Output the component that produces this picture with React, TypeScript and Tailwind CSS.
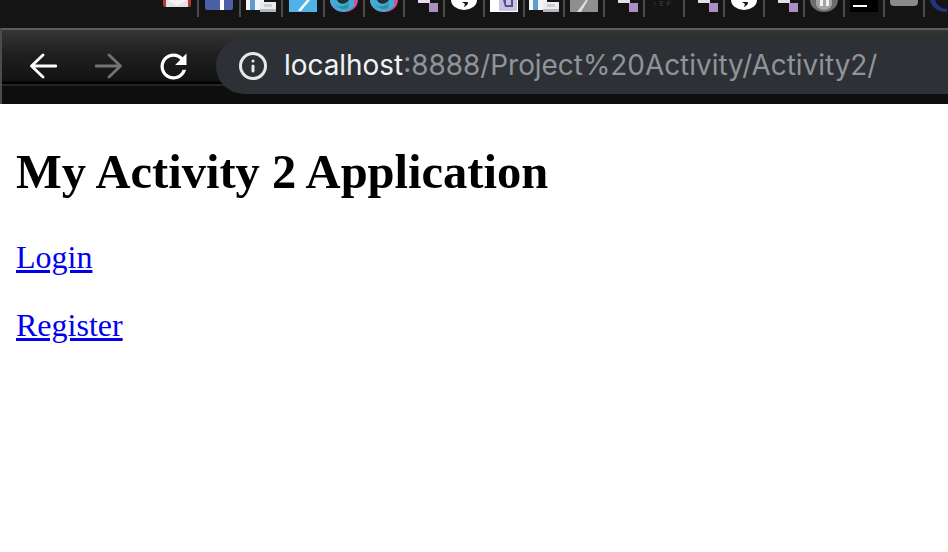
import { Info } from 'lucide-react';

function Gmail() {
  return (
    <svg width="28" height="7" viewBox="0 0 28 7">
      <path d="M0 0h28v5a2 2 0 0 1-2 2H2a2 2 0 0 1-2-2z" fill="#b5392c" />
      <path d="M3 0h22v7H3z" fill="#e4e1df" />
      <path d="M4 0l10 6 10-6z" fill="#f4f2f1" />
    </svg>
  );
}

function Facebook() {
  return (
    <svg width="28" height="10" viewBox="0 0 28 10">
      <path d="M0 0h28v8a2 2 0 0 1-2 2H2a2 2 0 0 1-2-2z" fill="#4a5fa5" />
      <path d="M15 0h4v10h-4z" fill="#ffffff" />
    </svg>
  );
}

function Docs() {
  return (
    <svg width="30" height="12" viewBox="0 0 30 12">
      <path d="M0 0h18v10H0z" fill="#f2f4f6" />
      <path d="M4 0h5v10H4z" fill="#5f9bd1" />
      <path d="M14 2h16v10H14z" fill="#e9ebee" />
      <path d="M14 9h16v3H14z" fill="#b4b7bd" />
      <path d="M18 4h8v3h-8z" fill="#c9ccd0" />
    </svg>
  );
}

function Pencil() {
  return (
    <svg width="28" height="12" viewBox="0 0 28 12">
      <path d="M0 0h28v12H0z" fill="#4fb3e8" />
      <path d="M9 11l2-3 7-8h3l-9 11z" fill="#ffffff" />
    </svg>
  );
}

function Swirl() {
  return (
    <svg width="28" height="12" viewBox="0 0 28 12">
      <path d="M0 0a14 12 0 0 0 28 0z" fill="#d0529b" />
      <path d="M0 0a13 12 0 0 0 24 6V0z" fill="#42abd6" />
      <path d="M7 0c2 5 9 5 12 0z" fill="#1f2f36" />
      <path d="M4 4c5 4 11 3 15-1l-1 5c-4 2-9 1-14-4z" fill="#2c8f94" />
    </svg>
  );
}

function Squares() {
  return (
    <svg width="28" height="12" viewBox="0 0 28 12">
      <path d="M8 0h12v3H8z" fill="#e8dcea" />
      <path d="M19 3h9v9h-9z" fill="#a98fc0" />
    </svg>
  );
}

function Moon() {
  return (
    <svg width="28" height="10" viewBox="0 0 28 10">
      <path d="M1 0a13 10 0 0 0 26 0z" fill="#ffffff" />
      <path d="M12 2h6c0 3-2 4-4 5l1-3z" fill="#141414" />
    </svg>
  );
}

function Tile() {
  return (
    <svg width="28" height="12" viewBox="0 0 28 12">
      <path d="M0 0h28v12H0z" fill="#ffffff" />
      <path d="M9 0h18v11H9z" fill="#c9c3dd" />
      <path d="M13 0l2 7h8V0h-2v5h-5V0z" fill="#5c4a98" />
    </svg>
  );
}

function GrayTile() {
  return (
    <svg width="28" height="12" viewBox="0 0 28 12">
      <path d="M0 0h28v12H0z" fill="#8f8f8f" />
      <path d="M7 12l3-4 6-8h2l-7 12z" fill="#dedede" />
    </svg>
  );
}

function Elf() {
  return (
    <span className="block h-[8px] w-[28px] text-center font-['Liberation_Sans',sans-serif] text-[7px] leading-[8px] tracking-[3px] text-[#4a443d]">
      ‹EF
    </span>
  );
}

function Pause() {
  return (
    <svg width="28" height="12" viewBox="0 0 28 12">
      <path d="M0 0a14 12 0 0 0 28 0z" fill="#6c6c6c" />
      <path d="M6 0h16v4a8 6 0 0 1-16 0z" fill="#a5a5a5" />
      <path d="M10 0h3v6h-3zM16 0h3v6h-3z" fill="#f2f2f2" />
    </svg>
  );
}

function Terminal() {
  return (
    <svg width="28" height="12" viewBox="0 0 28 12">
      <path d="M0 0h28v12H0z" fill="#000000" />
      <path d="M3 5h14v2H3z" fill="#ffffff" />
    </svg>
  );
}

function Cloud() {
  return (
    <svg width="28" height="6" viewBox="0 0 28 6">
      <path d="M0 0h28v2a4 4 0 0 1-4 4H4a4 4 0 0 1-4-4z" fill="#8c8888" />
    </svg>
  );
}

function Ring() {
  return (
    <svg width="28" height="12" viewBox="0 0 28 12">
      <path d="M0 0a16 14 0 0 0 17 12v-3a13 12 0 0 1-12-9z" fill="#27317c" />
    </svg>
  );
}

function BackArrow({ flip = false, color }: { flip?: boolean; color: string }) {
  return (
    <svg width="28" height="26" viewBox="0 0 28 26" className={`${flip ? '-scale-x-100' : ''} ${color} shrink-0`}>
      <path d="M14 2L2.5 13 14 24M3 13h24" fill="none" stroke="currentColor" strokeWidth="2.8" strokeLinecap="round" strokeLinejoin="round" />
    </svg>
  );
}

function Reload() {
  return (
    <svg width="39" height="39" viewBox="0 0 24 24" className="shrink-0 text-white">
      <path
        fill="currentColor"
        d="M17.65 6.35C16.2 4.9 14.21 4 12 4c-4.42 0-7.99 3.58-7.99 8s3.57 8 7.99 8c3.73 0 6.84-2.55 7.73-6h-2.08c-.82 2.33-3.04 4-5.65 4-3.31 0-6-2.69-6-6s2.69-6 6-6c1.66 0 3.14.69 4.22 1.78L13 11h7V4l-2.35 2.35z"
      />
    </svg>
  );
}

const bookmarks = [
  { id: 'gmail', width: 'w-[42px]', icon: <Gmail /> },
  { id: 'facebook', width: 'w-[42px]', icon: <Facebook /> },
  { id: 'docs', width: 'w-[42px]', icon: <Docs /> },
  { id: 'pencil', width: 'w-[42px]', icon: <Pencil /> },
  { id: 'swirl-a', width: 'w-[40px]', icon: <Swirl /> },
  { id: 'swirl-b', width: 'w-[40px]', icon: <Swirl /> },
  { id: 'squares-a', width: 'w-[40px]', icon: <Squares /> },
  { id: 'moon-a', width: 'w-[40px]', icon: <Moon /> },
  { id: 'tile', width: 'w-[40px]', icon: <Tile /> },
  { id: 'docs-b', width: 'w-[40px]', icon: <Docs /> },
  { id: 'gray', width: 'w-[40px]', icon: <GrayTile /> },
  { id: 'squares-b', width: 'w-[40px]', icon: <Squares /> },
  { id: 'elf', width: 'w-[40px]', icon: <Elf /> },
  { id: 'squares-c', width: 'w-[40px]', icon: <Squares /> },
  { id: 'moon-b', width: 'w-[40px]', icon: <Moon /> },
  { id: 'squares-d', width: 'w-[40px]', icon: <Squares /> },
  { id: 'pause', width: 'w-[40px]', icon: <Pause /> },
  { id: 'terminal', width: 'w-[40px]', icon: <Terminal /> },
  { id: 'cloud', width: 'w-[40px]', icon: <Cloud /> },
  { id: 'ring', width: 'w-[40px]', icon: <Ring /> },
];

export default function App() {
  return (
    <div className="h-[552px] w-[948px] overflow-hidden bg-white">
      <header className="h-[104px] bg-[#111111]">
        <div className="h-[28px] bg-[#141414] pl-[157px]">
          <div className="flex h-[17px]">
            {bookmarks.map((item) => (
              <div key={item.id} className={`${item.width} flex shrink-0 justify-center border-r-2 border-[#4a4a4a]`}>
                {item.icon}
              </div>
            ))}
          </div>
        </div>
        <div className="flex h-[76px] border-l-2 border-[#4c4c4c] bg-[linear-gradient(#5c5c5c_0,#5c5c5c_2px,#353535_2px,#1e1e1e_28px,#131313_53px,#000000_54px,#000000_56px,#252525_56px,#252525_58px,#0e0e0e_58px)] pt-[10px]">
          <div className="flex h-[56px] w-[214px] shrink-0 items-center pl-[27px]">
            <BackArrow color="text-white" />
            <div className="ml-[38px]">
              <BackArrow flip color="text-[#737373]" />
            </div>
            <div className="ml-[31px]">
              <Reload />
            </div>
          </div>
          <div className="flex h-[56px] flex-1 items-center rounded-l-[28px] bg-[#2d3135] pl-[22px] font-['Inter',sans-serif] text-[27.9px] whitespace-nowrap">
            <Info size={30} strokeWidth={2.4} className="mr-[16px] shrink-0 text-[#e8e8e8]" />
            <span className="text-[#f1f3f4]">localhost</span>
            <span className="text-[#8f9498]">:8888/Project%20Activity/Activity2/</span>
          </div>
        </div>
      </header>
      <main className="px-[16px] font-['Liberation_Serif',serif] text-black">
        <h1 className="mt-[41px] text-[48.5px] leading-[54px] font-bold">My Activity 2 Application</h1>
        <p className="mt-[40px] text-[32px] leading-[36px]">
          <a href="#" className="text-[#0000ee] underline">Login</a>
        </p>
        <p className="mt-[32px] text-[32px] leading-[36px]">
          <a href="#" className="text-[#0000ee] underline">Register</a>
        </p>
      </main>
    </div>
  );
}
